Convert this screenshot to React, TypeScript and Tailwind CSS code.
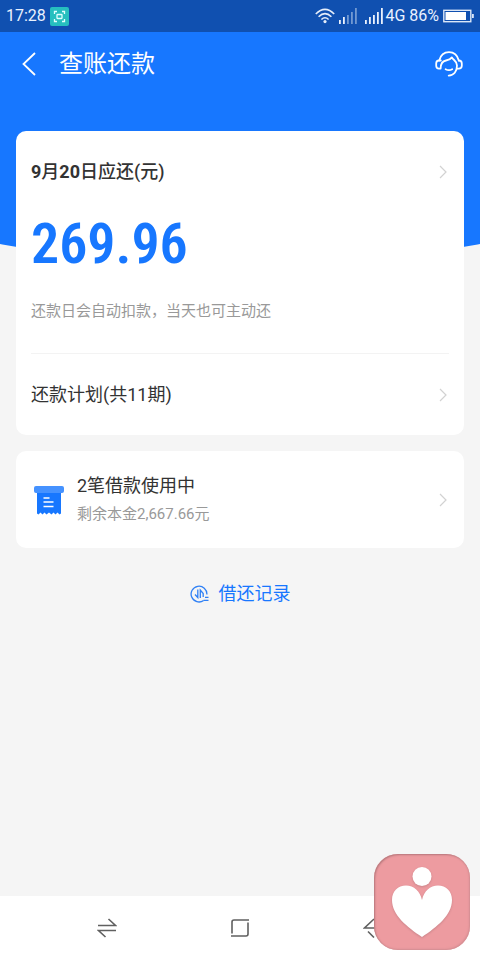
import React from "react";

const Chevron: React.FC = () => (
  <svg width="10" height="14" viewBox="0 0 10 14" fill="none" className="shrink-0">
    <path d="M1 1 L7 7 L1 13" stroke="#d2d2d2" strokeWidth="1.2" />
  </svg>
);

const ScanIcon: React.FC = () => (
  <svg width="19" height="19" viewBox="0 0 19 19" fill="none">
    <rect width="19" height="19" rx="2" fill="#26bfbf" />
    <g stroke="#e2ffff" strokeWidth="1.3">
      <path d="M4.500 7V4.500H7M12 4.500h2.500V7M14.500 12v2.500H12M7 14.500H4.500V12" />
      <rect x="7" y="7.500" width="5" height="4" rx="0.500" />
    </g>
  </svg>
);

const WifiIcon: React.FC = () => (
  <svg width="20" height="16" viewBox="0 0 20 16" fill="none" stroke="#e6eefa" strokeWidth="1.6">
    <path d="M0.800 6Q10 -3.200 19.200 6" />
    <path d="M3.600 8.800Q10 2.600 16.400 8.800" />
    <path d="M6.400 11.500Q10 8 13.600 11.500" />
    <circle cx="10" cy="13.600" r="1.600" fill="#e6eefa" stroke="none" />
  </svg>
);

// level = number of bright bars
const SignalIcon: React.FC<{ level: number }> = ({ level }) => (
  <svg width="18" height="16" viewBox="0 0 18 16">
    {[4, 7, 9, 12, 16].map((h, i) => (
      <rect
        key={h}
        x={i * 4}
        y={16 - h}
        width="1.8"
        height={h}
        fill="#e9f1fc"
        opacity={i < level ? 1 : 0.45}
      />
    ))}
  </svg>
);

const BatteryIcon: React.FC = () => (
  <svg width="31" height="14" viewBox="0 0 31 14" fill="none">
    <rect x="0.800" y="1.300" width="27" height="11.400" stroke="#dbe7f8" strokeWidth="1.4" />
    <rect x="2.500" y="3" width="20.500" height="8" fill="#fff" />
    <rect x="29" y="5" width="1.800" height="4" fill="#dbe7f8" />
  </svg>
);

const ServiceIcon: React.FC = () => (
  <svg
    width="28"
    height="26"
    viewBox="0 0 28 26"
    fill="none"
    stroke="#fff"
    strokeWidth="1.8"
    strokeLinecap="round"
    strokeLinejoin="round"
  >
    <path d="M4.200 9.500C5.600 4.300 9.400 1.200 14 1.200S22.400 4.300 23.800 9.500" />
    <path d="M5.800 9.500H4C2.200 9.500 1.200 10.800 1.200 12.500V14.800C1.200 16.500 2.300 17.600 4 17.600H5.600C5.600 13 7.500 10.200 11 9.500C13.600 9 15.600 8.200 16.900 6.400C17.900 9 21.800 9.500 22 14.500C22 20.500 18.800 24.600 13.700 24.600" />
    <path d="M23.800 9.500C25.800 9.500 26.800 10.800 26.800 12.500V14.800C26.800 16.500 25.700 17.600 23.800 17.600H21.800" />
    <path d="M10.600 18.200C12.600 19.400 15.200 19.400 17.200 18.200" />
  </svg>
);

const BillIcon: React.FC = () => (
  <svg width="30" height="30" viewBox="0 0 30 30">
    <path
      d="M3 4H27V28.500L25.500 29.500L23.500 27.500L21.500 29.500L19.500 27.500L17.500 29.500L15 27.500L12.500 29.500L10.500 27.500L8.500 29.500L6.500 27.500L4.500 29.500L3 28.500Z"
      fill="#1777ff"
    />
    <rect y="1" width="30" height="7" rx="2" fill="#4592ff" />
    <path d="M9.500 13H15.500M9.500 17H19.500M9.500 21.500H19.500" stroke="#fff" strokeWidth="1.500" />
  </svg>
);

const RecordIcon: React.FC = () => (
  <svg width="19" height="18" viewBox="0 0 19 18" fill="none" stroke="#2f80f5" strokeWidth="1.300">
    <path d="M16.900 9.500A7.900 7.900 0 1 0 13.600 15.500" />
    <path d="M5 9.500L7.800 12.500V4.500M10.300 13V5L13.200 8.500V12" />
    <path d="M15 12.300H18.500M13.500 15.300H18.500" />
  </svg>
);

const App: React.FC = () => {
  return (
    <div className="relative flex min-h-screen flex-col overflow-x-clip bg-[#f5f5f5] font-[Roboto,'Noto_Sans_CJK_SC',sans-serif] text-[#333]">
      {/* Status bar */}
      <div className="flex h-8 items-center justify-between bg-[#1050b0] px-1.5 text-base text-[#eaf2ff]">
        <div className="flex items-center gap-1">
          <span>17:28</span>
          <ScanIcon />
        </div>
        <div className="flex items-center">
          <WifiIcon />
          <div className="ml-1 flex">
            <SignalIcon level={2} />
          </div>
          <div className="ml-2 flex">
            <SignalIcon level={5} />
          </div>
          <span className="ml-0.5">4G</span>
          <span className="mx-1">86%</span>
          <BatteryIcon />
        </div>
      </div>

      {/* Title bar */}
      <header className="flex h-16 items-center bg-[#1777ff] pr-[17px] pl-5 text-white">
        <button type="button" aria-label="返回" className="mr-[21px]">
          <svg width="18" height="24" viewBox="0 0 18 24" fill="none">
            <path d="M15 1L3.500 12L15 23" stroke="#fff" strokeWidth="1.800" />
          </svg>
        </button>
        <h1 className="flex-1 text-2xl">查账还款</h1>
        <button type="button" aria-label="客服">
          <ServiceIcon />
        </button>
      </header>

      {/* Curved end of the blue area, the first card overlaps it */}
      <div className="-ml-[20%] h-[166px] w-[140%] shrink-0 rounded-b-[50%_60px] bg-[#1777ff]" />

      <main className="z-10 -mt-[131px] flex flex-col gap-4 px-4">
        <section className="rounded-[10px] bg-white px-[15px]">
          <button type="button" className="flex w-full items-center justify-between pt-[29px] text-left">
            <span className="text-lg leading-6 font-bold">
              9<span className="font-medium">月</span>20<span className="font-medium">日应还(元)</span>
            </span>
            <Chevron />
          </button>
          <p className="mt-7 font-['Roboto_Condensed',Roboto,sans-serif] text-[56px] leading-[64px] font-semibold text-[#1777ff]">
            269.96
          </p>
          <p className="mt-[23px] text-[15px] leading-6 text-[#999]">
            还款日会自动扣款，当天也可主动还
          </p>
          <button
            type="button"
            className="mt-[30px] flex h-[82px] w-full items-center justify-between border-t border-[#f3f3f3] text-left"
          >
            <span className="text-lg">还款计划(共11期)</span>
            <Chevron />
          </button>
        </section>

        <button type="button" className="flex h-[97px] items-center rounded-[10px] bg-white pr-[15px] pl-[18px] text-left">
          <BillIcon />
          <span className="ml-[13px] flex flex-1 flex-col">
            <span className="text-lg leading-7">2笔借款使用中</span>
            <span className="text-[15px] leading-7 text-[#999]">剩余本金2,667.66元</span>
          </span>
          <Chevron />
        </button>

        <a href="#records" className="mt-4 flex items-center justify-center gap-2.5 text-lg text-[#1777ff]">
          <RecordIcon />
          借还记录
        </a>
      </main>

      {/* System navigation */}
      <nav className="mt-auto flex h-16 items-center justify-around bg-white px-10">
        <button type="button" aria-label="切换">
          <svg width="20" height="20" viewBox="0 0 20 20" fill="none" stroke="#606060" strokeWidth="1.600">
            <path d="M1 7.500H18.500L11.500 1" />
            <path d="M19 12.500H1.500L8.500 19" />
          </svg>
        </button>
        <button type="button" aria-label="主页">
          <svg width="20" height="20" viewBox="0 0 20 20" fill="none" stroke="#606060" strokeWidth="1.600">
            <path d="M2 15.500V4Q2 2 4 2H19" />
            <path d="M18 4.500V16Q18 18 16 18H1" />
          </svg>
        </button>
        <button type="button" aria-label="后退">
          <svg width="20" height="20" viewBox="0 0 20 20" fill="none" stroke="#606060" strokeWidth="1.600">
            <path d="M19 10H1.500L11 1" />
            <path d="M5 13.500L11 19.500" />
          </svg>
        </button>
      </nav>

      {/* Heart badge over the navigation */}
      <div className="absolute right-2.5 bottom-2.5 z-20 size-24 rounded-3xl bg-[#ed9ba0] shadow-[inset_1px_1px_2px_#b5777b,inset_-1px_-1px_2px_#d58f94]">
        <svg width="96" height="96" viewBox="0 0 96 96" className="drop-shadow-[0_1px_1px_#c98489]">
          <circle cx="48" cy="22.500" r="9.500" fill="#fff" />
          <path
            d="M48 83C33 73 18 61 18 46C18 37 24 31.500 32 31.500C40 31.500 46 37 48 46C50 37 56 31.500 64 31.500C72 31.500 78 37 78 46C78 61 63 73 48 83Z"
            fill="#fff"
          />
        </svg>
      </div>
    </div>
  );
};

export default App;
